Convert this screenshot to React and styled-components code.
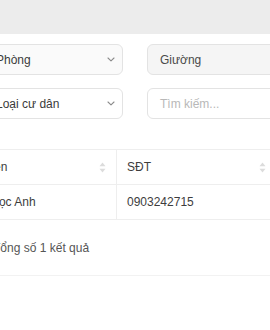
import styled, { createGlobalStyle } from "styled-components";

const GlobalStyle = createGlobalStyle`
  html, body {
    margin: 0;
    padding: 0;
    background: #fff;
    overflow: hidden;
  }
  body {
    font-family: "Liberation Sans", Arial, sans-serif;
    font-size: 12px;
    color: #3d3d3d;
  }
`;

const Chevron = () => (
  <svg width="8" height="5" viewBox="0 0 8 5" fill="none">
    <path d="M1 1l3 2.8L7 1" stroke="#8c8c8c" strokeWidth="1.1" strokeLinecap="round" strokeLinejoin="round" />
  </svg>
);

const SortIcon = () => (
  <svg width="7" height="11" viewBox="0 0 7 11">
    <path d="M3.5 0.5L6.5 4.3H0.5z" fill="#dcdcdc" />
    <path d="M3.5 10.5L6.5 6.7H0.5z" fill="#dcdcdc" />
  </svg>
);

const App = () => {
  return (
    <>
      <GlobalStyle />
      <TopBar />
      <Page>
        <Filters>
          <Field $bg="#fafafa">
            <span>Phòng</span>
            <Chevron />
          </Field>
          <Field $bg="#f5f5f5" $muted>
            <span>Giường</span>
          </Field>
          <Field>
            <span>Loại cư dân</span>
            <Chevron />
          </Field>
          <Field>
            <Placeholder>Tìm kiếm...</Placeholder>
          </Field>
        </Filters>

        <Table>
          <Row>
            <Cell $w={171}>
              <span>Họ và tên</span>
              <SortIcon />
            </Cell>
            <Cell $w={160}>
              <span>SĐT</span>
              <SortIcon />
            </Cell>
          </Row>
          <Row>
            <Cell $w={171}>Trần Ngọc Anh</Cell>
            <Cell $w={160}>0903242715</Cell>
          </Row>
        </Table>

        <Footer>Tổng số 1 kết quả</Footer>
      </Page>
    </>
  );
};

// Styles
const TopBar = styled.div`
  height: 34px;
  background: #ececec;
`;

const Page = styled.div`
  margin-left: -17px;
  padding-top: 10px;
`;

const Filters = styled.div`
  display: grid;
  grid-template-columns: 140px 140px;
  column-gap: 24px;
  row-gap: 13px;
`;

const Field = styled.div`
  height: 31px;
  box-sizing: border-box;
  display: flex;
  align-items: center;
  justify-content: space-between;
  padding: 0 7px 0 12px;
  border: 1px solid #e3e3e3;
  border-radius: 6px;
  background: ${(p) => p.$bg || "#fff"};
  color: ${(p) => (p.$muted ? "#4a4a4a" : "#3a3a3a")};
`;

const Placeholder = styled.span`
  color: #b8b8b8;
`;

const Table = styled.div`
  margin-top: 30px;
  margin-left: -37px;
  border-top: 1px solid #eeeeee;
`;

const Row = styled.div`
  display: flex;
  height: 34px;
  border-bottom: 1px solid #eeeeee;
`;

const Cell = styled.div`
  width: ${(p) => p.$w}px;
  flex: none;
  box-sizing: border-box;
  display: flex;
  align-items: center;
  justify-content: space-between;
  padding: 0 10px;
  border-right: 1px solid #eeeeee;
`;

const Footer = styled.div`
  padding: 0 10px;
  height: 55px;
  display: flex;
  align-items: center;
  border-bottom: 1px solid #f2f2f2;
  color: #555;
`;

export default App;
